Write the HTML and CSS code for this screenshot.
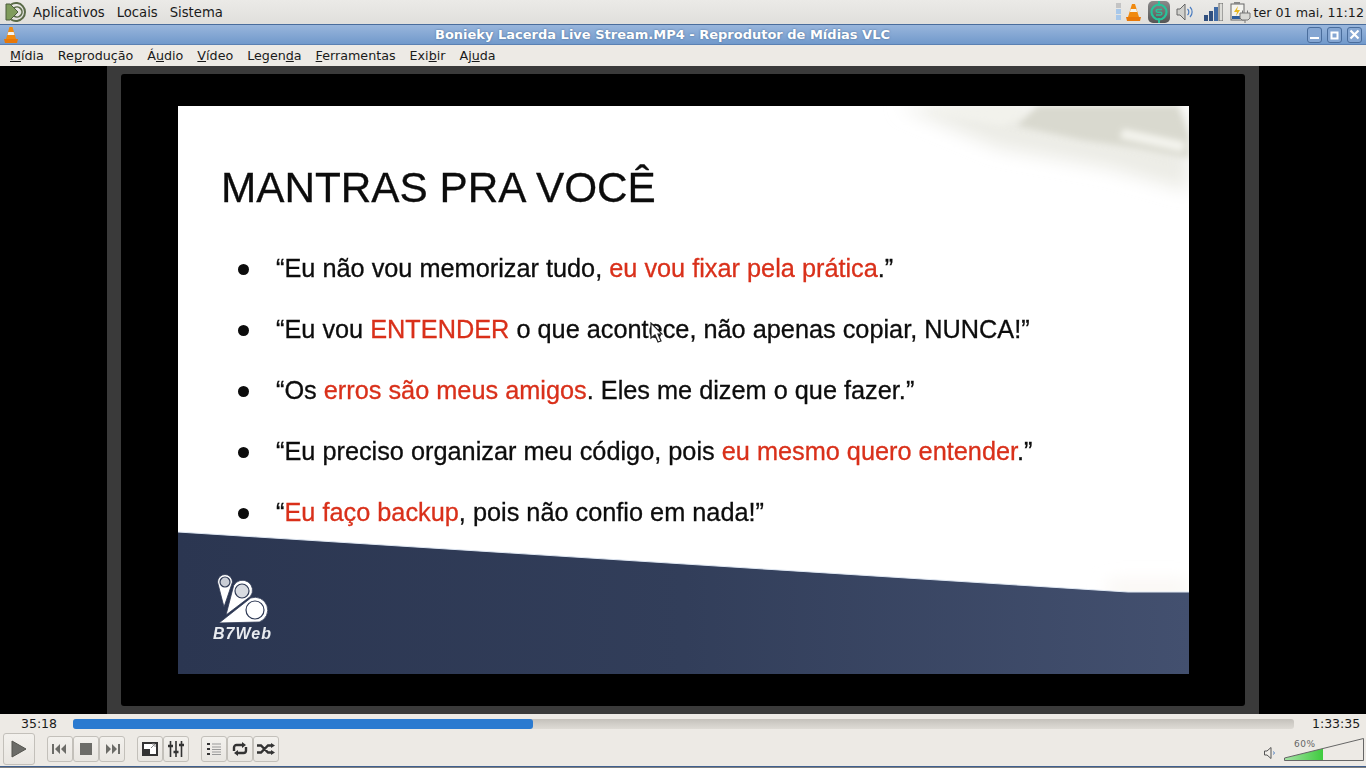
FILE: index.html
```html
<!DOCTYPE html>
<html lang="pt-BR">

<head>
    <meta charset="UTF-8">
    <title>Reprodutor de Mídias VLC</title>
    <link rel="stylesheet" href="styles.css">
</head>

<body>
    <div class="panel">
        <svg class="mint" width="22" height="22" viewBox="0 0 22 22">
            <path d="M6 3.500A9 9 0 1 1 6 18.500" fill="none" stroke="#5a6b48" stroke-width="2"/>
            <path d="M9 7a5 5 0 1 1 0 8" fill="none" stroke="#5a6b48" stroke-width="1.600"/>
            <path d="M1 3l4 0 8 8-8 8-4 0z" fill="#7f9c5c" stroke="#4d5c3d"/>
        </svg>
        <span class="panel-item">Aplicativos</span>
        <span class="panel-item">Locais</span>
        <span class="panel-item">Sistema</span>

        <div class="tray">
            <svg class="tray-dots" width="5" height="18" viewBox="0 0 5 18">
                <rect width="5" height="5" fill="#c4c4c4"/>
                <rect y="6" width="5" height="5" fill="#a8c8ea"/>
                <rect y="12" width="5" height="5" fill="#a8c8ea"/>
            </svg>
            <svg class="tray-vlc" width="15" height="17" viewBox="0 0 15 17">
                <path d="M6 0h3l4 13H2z" fill="#f08a10"/>
                <path d="M4.700 5h5.600l.8 3H3.900z" fill="#f4f4f0"/>
                <path d="M0 13h15l-1 4H1z" fill="#e87808"/>
            </svg>
            <svg class="tray-app" width="22" height="22" viewBox="0 0 22 22">
                <defs>
                    <linearGradient id="appbg" x1="0" y1="0" x2="0" y2="1">
                        <stop offset="0" stop-color="#8a8a8a"/>
                        <stop offset="1" stop-color="#555"/>
                    </linearGradient>
                </defs>
                <rect width="22" height="22" rx="5" fill="url(#appbg)"/>
                <circle cx="11" cy="11" r="7.500" fill="none" stroke="#27c49a" stroke-width="2.200"/>
                <path d="M11 0v5M11 17v5" stroke="#27c49a" stroke-width="2"/>
                <path d="M14 8.500H9.500a1.300 1.300 0 0 0 0 2.700h3a1.300 1.300 0 0 1 0 2.700H8" fill="none" stroke="#27c49a" stroke-width="1.500"/>
            </svg>
            <svg class="tray-sound" width="18" height="18" viewBox="0 0 18 18">
                <path d="M1 6h3l5-5v16l-5-5H1z" fill="#d0d0cc" stroke="#666"/>
                <path d="M11.500 6a4 4 0 0 1 0 6" fill="none" stroke="#4a7cc0" stroke-width="1.200"/>
                <path d="M14 4a7 7 0 0 1 0 10" fill="none" stroke="#4a7cc0" stroke-width="1.200"/>
            </svg>
            <svg class="tray-signal" width="19" height="18" viewBox="0 0 19 18">
                <rect y="12" width="4" height="6" fill="#31507f"/>
                <rect x="5" y="8" width="4" height="10" fill="#31507f"/>
                <rect x="10" y="4" width="4" height="14" fill="#3f6aa5"/>
                <rect x="15" y="0" width="4" height="18" fill="#dcdcd8" stroke="#666"/>
            </svg>
            <svg class="tray-battery" width="21" height="22" viewBox="0 0 21 22">
                <rect x="1" y="3" width="13" height="16" fill="#f4f4f0" stroke="#666"/>
                <rect x="4" y="1" width="6" height="2" fill="#888"/>
                <rect x="2" y="15" width="11" height="3" fill="#2f5f9e"/>
                <path d="M8 5l-4 6h3l-1 4 4-6H7z" fill="#e8b820"/>
                <path d="M10 12h10v5l-2 2h-6l-2-2z" fill="#d8d8d4" stroke="#777"/>
                <path d="M12.500 9.500v2.500M17.500 9.500v2.500M15 19v3" stroke="#777"/>
            </svg>
            <span class="clock">ter 01 mai, 11:12</span>
        </div>
    </div>

    <div class="titlebar">
        <svg class="title-icon" width="14" height="16" viewBox="0 0 14 16">
            <path d="M5.500 0h3l3.500 12H2z" fill="#f08a10"/>
            <path d="M4.300 5h5.400l.8 3H3.500z" fill="#f4f4f0"/>
            <path d="M0 12h14l-1 4H1z" fill="#e87808"/>
        </svg>
        <span class="title-text">Bonieky Lacerda Live Stream.MP4 - Reprodutor de Mídias VLC</span>
        <div class="win-btns">
            <div class="win-btn"><svg width="15" height="16" viewBox="0 0 15 16"><rect x="3" y="10" width="9" height="2" fill="#fff"/></svg></div>
            <div class="win-btn"><svg width="15" height="16" viewBox="0 0 15 16"><rect x="4.500" y="5.500" width="6" height="6" fill="none" stroke="#fff" stroke-width="2"/></svg></div>
            <div class="win-btn"><svg width="15" height="16" viewBox="0 0 15 16"><path d="M3.500 3.500l8 8M11.500 3.500l-8 8" stroke="#fff" stroke-width="2.200"/></svg></div>
        </div>
    </div>

    <div class="menubar">
        <span><u>M</u>ídia</span>
        <span>Re<u>p</u>rodução</span>
        <span>Á<u>u</u>dio</span>
        <span><u>V</u>ídeo</span>
        <span>Legen<u>d</u>a</span>
        <span><u>F</u>erramentas</span>
        <span>Exi<u>b</u>ir</span>
        <span>Aj<u>u</u>da</span>
    </div>

    <div class="video">
        <div class="video-frame">
            <div class="video-inner">
                <div class="slide">
                    <svg class="slide-bg" width="1011" height="568" viewBox="0 0 1011 568">
                        <defs>
                            <linearGradient id="band" x1="0" y1="0" x2="1" y2="0">
                                <stop offset="0" stop-color="#2b3651"/>
                                <stop offset="0.5" stop-color="#323e5a"/>
                                <stop offset="1" stop-color="#43506f"/>
                            </linearGradient>
                            <filter id="soft" x="-20%" y="-20%" width="140%" height="140%"><feGaussianBlur stdDeviation="3"/></filter>
                            <filter id="softer" x="-50%" y="-50%" width="200%" height="200%"><feGaussianBlur stdDeviation="9"/></filter>
                        </defs>
                        <g filter="url(#softer)">
                            <path d="M720 0H1011V85L930 62 820 42z" fill="#ecece6"/>
                            <path d="M930 476H1011V490H930z" fill="#f8f4f0"/>
                        </g>
                        <g filter="url(#soft)">
                            <path d="M839 20L860 0H1000L1011 30V52L960 42 905 34z" fill="#d9d9cf"/>
                            <path d="M945 23L1007 36 1005 46 942 32z" fill="#f4f4ee"/>
                            <path d="M745 5L830 0 850 6 825 20z" fill="#f2f2ec"/>
                        </g>
                        <path d="M0 426L950 486H1011V568H0z" fill="url(#band)"/>
                        <path d="M0 426L950 486H1011" fill="none" stroke="#dfe7f2" stroke-width="1"/>
                    </svg>
                    <h1 class="slide-title">MANTRAS PRA VOCÊ</h1>
                    <ul class="mantras">
                        <li>“Eu não vou memorizar tudo, <em>eu vou fixar pela prática</em>.”</li>
                        <li>“Eu vou <em>ENTENDER</em> o que acontece, não apenas copiar, NUNCA!”</li>
                        <li>“Os <em>erros são meus amigos</em>. Eles me dizem o que fazer.”</li>
                        <li>“Eu preciso organizar meu código, pois <em>eu mesmo quero entender</em>.”</li>
                        <li>“<em>Eu faço backup</em>, pois não confio em nada!”</li>
                    </ul>
                    <div class="brand">
                        <svg width="52" height="50" viewBox="0 0 52 50">
                            <g fill="#fff" stroke="#2e3954" stroke-width="0.800">
                                <path d="M1.500 8a7.500 7.500 0 0 1 15 0L8 33z"/>
                                <path d="M10 41L17.700 11.500a10 10 0 1 1 16.600 11z"/>
                                <path d="M3 49L34.700 24a12.700 12.700 0 1 1 8.600 24z"/>
                            </g>
                            <circle cx="9" cy="8" r="5" fill="#c9cdd5" stroke="#2e3954" stroke-width="1.200"/>
                            <circle cx="26" cy="17" r="7" fill="#d8dbe1" stroke="#2e3954" stroke-width="1.200"/>
                            <circle cx="39" cy="36" r="9" fill="#fff" stroke="#2e3954" stroke-width="1.200"/>
                        </svg>
                        <span class="brand-name">B7Web</span>
                    </div>
                    <svg class="cursor" width="13" height="21" viewBox="0 0 13 21">
                        <path d="M1 1v15l4-3 3 7 3-1-3-7h4z" fill="#fff" stroke="#222" stroke-width="1.200"/>
                    </svg>
                </div>
            </div>
        </div>
    </div>

    <div class="controls">
        <div class="seek-row">
            <span class="time time-done">35:18</span>
            <div class="seek"><div class="seek-done"></div></div>
            <span class="time">1:33:35</span>
        </div>
        <div class="btn-row">
            <button class="btn btn-play"><svg width="16" height="18" viewBox="0 0 16 18"><path d="M1 1l14 8-14 8z" fill="#6c6c68" stroke="#55554f"/></svg></button>
            <div class="btn-group">
                <button class="btn"><svg width="16" height="10" viewBox="0 0 16 10"><path d="M0 0h2v10H0zM8 0v10L3 5zM14 0v10L9 5z" fill="#6c6c68"/></svg></button>
                <button class="btn"><svg width="12" height="12" viewBox="0 0 12 12"><rect width="12" height="12" fill="#6c6c68"/></svg></button>
                <button class="btn"><svg width="16" height="10" viewBox="0 0 16 10"><path d="M14 0h2v10h-2zM8 0v10l5-5zM2 0v10l5-5z" fill="#6c6c68"/></svg></button>
            </div>
            <div class="btn-group">
                <button class="btn"><svg width="16" height="14" viewBox="0 0 16 14"><rect x="1" y="1" width="14" height="12" fill="#fff" stroke="#333" stroke-width="2"/><rect x="2" y="7" width="6" height="5" fill="#333"/><path d="M9 6l4-4M10 2h3v3" stroke="#888" fill="none"/></svg></button>
                <button class="btn"><svg width="16" height="16" viewBox="0 0 16 16"><path d="M2.500 0v16M8 0v16M13.500 0v16" stroke="#333" stroke-width="1.600"/><path d="M0 5h5M5.500 11h5M11 4h5" stroke="#333" stroke-width="2.400"/></svg></button>
            </div>
            <div class="btn-group">
                <button class="btn"><svg width="14" height="12" viewBox="0 0 14 12"><path d="M0 0h3v2H0zM0 5h3v2H0zM0 10h3v2H0z" fill="#333"/><path d="M5 1h9M5 4h9M5 6.500h9M5 9h9M5 11.500h9" stroke="#999"/></svg></button>
                <button class="btn"><svg width="18" height="14" viewBox="0 0 18 14"><path d="M3 9V5.500A2.500 2.500 0 0 1 5.500 3H12M15 5v3.500a2.500 2.500 0 0 1-2.500 2.500H6" fill="none" stroke="#333" stroke-width="2.400"/><path d="M11 0l4 3-4 3zM7 8l-4 3 4 3z" fill="#333"/></svg></button>
                <button class="btn"><svg width="18" height="12" viewBox="0 0 18 12"><path d="M0 2.500h4l7 7h3M0 9.500h4l7-7h3" fill="none" stroke="#333" stroke-width="2.400"/><path d="M14 0l4 2.500-4 2.500zM14 7l4 2.500-4 2.500z" fill="#333"/></svg></button>
            </div>
            <div class="volume">
                <svg class="vol-icon" width="12" height="12" viewBox="0 0 12 12">
                    <path d="M.5 4h2.500l4-3.500v11L3 8H.5z" fill="#f0ede8" stroke="#555"/>
                    <path d="M9.500 4.500a2 2 0 0 1 0 3" fill="none" stroke="#4a7cc0"/>
                </svg>
                <div class="vol-scale">
                    <svg width="80" height="23" viewBox="0 0 80 23">
                        <defs>
                            <linearGradient id="volfill" x1="0" y1="0" x2="1" y2="0">
                                <stop offset="0" stop-color="#a6e2a6"/>
                                <stop offset="1" stop-color="#3ecb3e"/>
                            </linearGradient>
                        </defs>
                        <path d="M.5 22.500V20L39 10.500V22.500z" fill="url(#volfill)"/>
                        <path d="M.5 22.500V20L79.500 .5V22.500z" fill="none" stroke="#666"/>
                    </svg>
                    <span class="vol-label">60%</span>
                </div>
            </div>
        </div>
    </div>
    <div class="bottom-edge"></div>
</body>

</html>
```

FILE: styles.css
```css
* {
    box-sizing: border-box;
}

html,
body {
    height: 100%;
}

body {
    margin: 0;
    display: flex;
    flex-direction: column;
    overflow: hidden;
    background: #000;
    font-family: "DejaVu Sans", sans-serif;
    font-size: 13px;
    color: #1a1a1a;
}

/* top panel */
.panel {
    height: 24px;
    display: flex;
    align-items: center;
    padding-left: 5px;
    background: linear-gradient(#ebeae7, #e0dfdc);
}

.mint {
    margin-right: 6px;
}

.panel-item {
    margin-right: 12px;
    font-size: 13.200px;
}

.tray {
    margin-left: auto;
    display: flex;
    align-items: center;
    padding-right: 2px;
}

.clock {
    font-size: 12.700px;
}

.tray-dots {
    margin-right: 5px;
}

.tray-vlc {
    margin-right: 7px;
}

.tray-app {
    margin-right: 6px;
}

.tray-sound {
    margin-right: 10px;
}

.tray-signal {
    margin-right: 7px;
}

.tray-battery {
    margin-right: 3px;
}

/* window title */
.titlebar {
    height: 21px;
    position: relative;
    display: flex;
    align-items: center;
    padding-left: 4px;
    background: linear-gradient(#99b6dc, #7199cb);
    border-top: 1px solid #4a6d9c;
    border-bottom: 1px solid #5b81b3;
}

.title-text {
    position: absolute;
    left: 0;
    right: 41px;
    text-align: center;
    font-weight: bold;
    color: #fff;
    text-shadow: 0 0 2px #48688f;
}

.win-btns {
    margin-left: auto;
    display: flex;
    gap: 5px;
    padding-right: 4px;
}

.win-btn {
    width: 15px;
    height: 16px;
    display: flex;
    border: 1px solid #4a6d9c;
    border-radius: 3px;
    background: #85a6d2;
    overflow: hidden;
}

.win-btn svg {
    flex: none;
    margin: -1px;
}

/* menu */
.menubar {
    height: 21px;
    display: flex;
    align-items: center;
    gap: 14px;
    padding-left: 10px;
    font-size: 12.700px;
    background: #edeae5;
}

/* video area */
.video {
    height: 648px;
    display: flex;
    justify-content: center;
    background: #000;
}

.video-frame {
    width: 1152px;
    padding: 8px 14px;
    background: #3a3a3a;
}

.video-inner {
    height: 100%;
    padding: 32px 56px 32px 57px;
    background: #000;
    border-radius: 3px;
}

.slide {
    position: relative;
    width: 1011px;
    height: 568px;
    padding: 58px 0 0 43px;
    overflow: hidden;
    background: #fff;
    font-family: "Liberation Sans", Arial, sans-serif;
    color: #0c0c0c;
}

.slide-bg {
    position: absolute;
    left: 0;
    top: 0;
}

.slide-title {
    position: relative;
    margin: 0;
    font-size: 42.300px;
    line-height: 48px;
    font-weight: normal;
    -webkit-text-stroke: 0.3px;
    filter: blur(0.4px);
}

.mantras {
    position: relative;
    list-style: none;
    margin: 26px 0 0;
    padding: 0 0 0 55px;
    font-size: 25.300px;
    -webkit-text-stroke: 0.3px;
    filter: blur(0.4px);
}

.mantras li {
    position: relative;
    height: 61px;
    line-height: 61px;
    white-space: nowrap;
}

.mantras li::before {
    content: "";
    position: absolute;
    left: -38px;
    top: 26px;
    width: 11px;
    height: 11px;
    border-radius: 50%;
    background: #0c0c0c;
}

.mantras em {
    font-style: normal;
    color: #d9301a;
}

.brand {
    position: absolute;
    left: 35px;
    top: 468px;
    display: flex;
    flex-direction: column;
    align-items: center;
    filter: blur(0.4px);
}

.brand-name {
    margin-top: 2px;
    font-size: 16px;
    line-height: 16px;
    font-weight: bold;
    font-style: italic;
    color: #e8ebf0;
    letter-spacing: 1px;
}

.cursor {
    position: absolute;
    left: 472px;
    top: 216px;
}

/* controls */
.controls {
    height: 52px;
    background: #edeae5;
}

.seek-row {
    height: 19px;
    display: flex;
    align-items: center;
    padding-left: 21px;
}

.time {
    font-size: 12.500px;
}

.time-done {
    width: 52px;
}

.seek {
    width: 1221px;
    height: 10px;
    margin-right: 18px;
    border-radius: 3px;
    background: linear-gradient(#c4c1bb, #dedbd5);
}

.seek-done {
    width: 460px;
    height: 100%;
    border-radius: 3px;
    background: #2a7ad0;
}

.btn-row {
    height: 32px;
    display: flex;
    align-items: center;
    padding-left: 3px;
}

.btn-group {
    display: flex;
    margin-right: 12px;
}

.btn {
    width: 26px;
    height: 26px;
    display: flex;
    align-items: center;
    justify-content: center;
    padding: 0;
    border: 1px solid #c3c0ba;
    border-radius: 3px;
    background: linear-gradient(#f3f1ed, #e9e6e1);
}

.btn-play {
    width: 32px;
    height: 32px;
    margin-right: 12px;
}

.volume {
    margin-left: auto;
    display: flex;
    align-items: flex-end;
    gap: 8px;
    padding-right: 2px;
}

.vol-icon {
    margin-bottom: 2px;
}

.vol-scale {
    position: relative;
    height: 23px;
}

.vol-label {
    position: absolute;
    left: 10px;
    top: 1px;
    font-size: 9px;
    letter-spacing: 0.5px;
    color: #666;
}

.bottom-edge {
    flex: 1;
    border-top: 1px solid #3f5f8e;
    background: #808080;
}
```
